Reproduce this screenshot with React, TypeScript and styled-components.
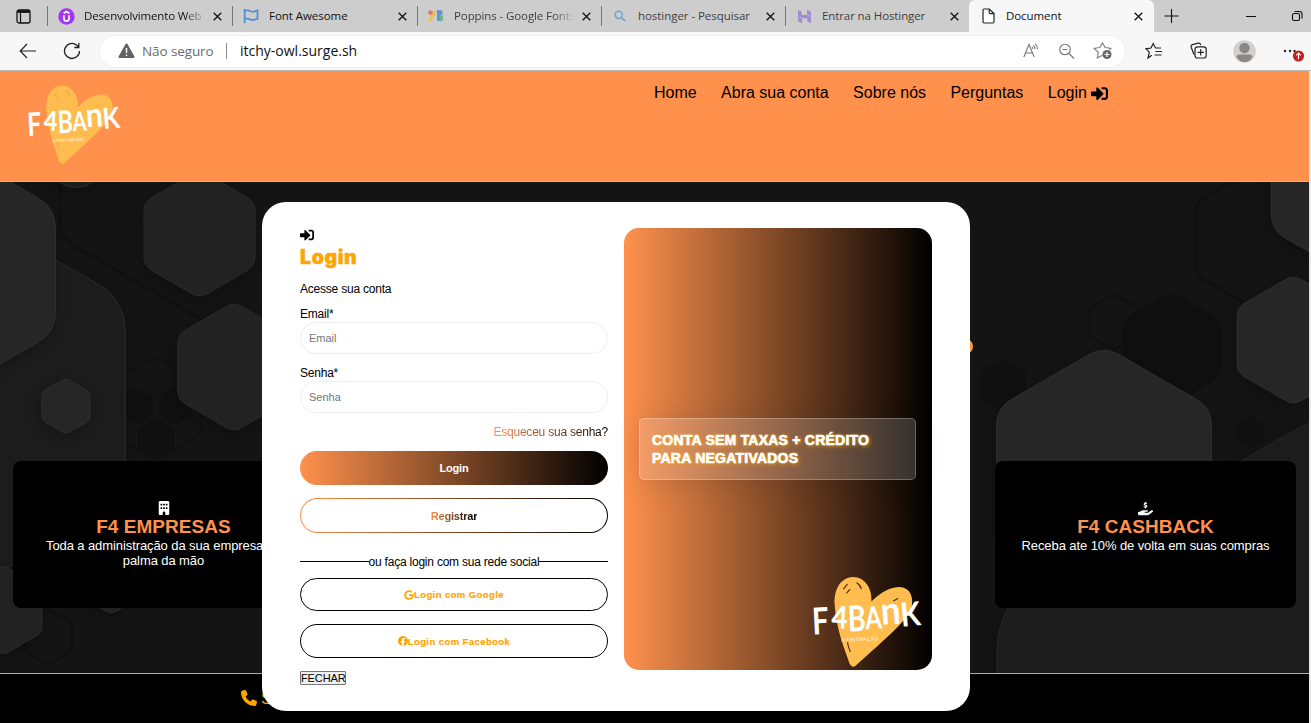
import React from "react";
import styled, { createGlobalStyle, css } from "styled-components";
import {
  FaBuilding,
  FaFacebook,
  FaGoogle,
  FaHandHoldingDollar,
  FaPhone,
} from "react-icons/fa6";
import { FaSignInAlt } from "react-icons/fa";

const GlobalStyle = createGlobalStyle`
  * { box-sizing: border-box; margin: 0; padding: 0; }
  body { background: #e9e9e9; font-family: "Liberation Sans", Arial, sans-serif; overflow: hidden; }
`;

const brand = "linear-gradient(to right, #ff914d, #000)";

const Window = styled.div`
  display: flex;
  flex-direction: column;
  width: 1311px;
  height: 723px;
  overflow: hidden;
`;

/* ---------- Browser chrome ---------- */

const TabStrip = styled.div`
  display: flex;
  align-items: stretch;
  height: 32px;
  background: #cdcdcd;
  font-family: "Open Sans", "Noto Sans", sans-serif;
  font-size: 11.5px;
  color: #111;
`;

const WorkspaceSlot = styled.div`
  display: flex;
  width: 47px;
  align-items: center;
  justify-content: center;
`;

const Tab = styled.div<{ $active?: boolean; $dim?: boolean; $width: number }>`
  display: flex;
  align-items: center;
  width: ${(p) => p.$width}px;
  padding: 0 9px 0 10px;
  color: ${(p) => (p.$dim ? "#3f3f3f" : "#111")};
  background: linear-gradient(#777, #777) left center / 1px 20px no-repeat;
  ${(p) =>
    p.$active &&
    css`
      background: #f7f7f7;
      border-radius: 6px 6px 0 0;
      padding-right: 10px;
    `}
`;

const TabIcon = styled.span<{ $dim?: boolean }>`
  display: flex;
  width: 18px;
  height: 18px;
  margin-right: 9px;
  align-items: center;
  justify-content: center;
  opacity: ${(p) => (p.$dim ? 0.6 : 1)};
`;

const TabTitle = styled.span<{ $fade?: boolean; $track: number }>`
  flex: 1;
  min-width: 0;
  overflow: hidden;
  white-space: nowrap;
  line-height: 18px;
  letter-spacing: ${(p) => p.$track}px;
  ${(p) =>
    p.$fade &&
    css`
      mask-image: linear-gradient(to right, #000 84%, rgba(0, 0, 0, 0.15));
    `}
`;

const CloseSlot = styled.span`
  display: flex;
  width: 20px;
  justify-content: flex-end;
  padding-right: 1px;
`;

const WindowButtons = styled.div`
  display: flex;
  flex: 1;
  align-items: center;
  padding-left: 10px;
`;

const Toolbar = styled.div`
  display: flex;
  align-items: center;
  height: 39px;
  padding: 0 5px 0 19px;
  background: #f7f7f7;
  border-bottom: 1px solid #b9b9b9;
  font-family: "Open Sans", "Noto Sans", sans-serif;
`;

const ToolButton = styled.span<{ $left?: number }>`
  display: flex;
  margin-left: ${(p) => p.$left ?? 0}px;
`;

const AddressBar = styled.div`
  display: flex;
  align-items: center;
  width: 1026px;
  height: 31px;
  margin-left: 19px;
  padding: 0 13px 0 18px;
  border-radius: 16px;
  background: #fff;
  box-shadow: 0 0 0 1px #efefef;
  font-size: 13.5px;
  line-height: 20px;
`;

const NotSecure = styled.span`
  margin-left: 7px;
  width: 73px;
  white-space: nowrap;
  color: #6b6b6b;
  letter-spacing: -0.1px;
`;

const AddressDivider = styled.span`
  width: 1px;
  height: 16px;
  margin: 0 13px 0 11px;
  background: #8a8a8a;
`;

const Address = styled.span`
  flex: 1;
  color: #111;
  font-size: 14px;
`;

/* ---------- Site ---------- */

const Site = styled.div`
  position: relative;
  display: flex;
  flex-direction: column;
  width: 1309px;
  flex: 1;
  min-height: 0;
`;

const Header = styled.header`
  display: flex;
  align-items: flex-start;
  height: 111px;
  background: #ff914d;
  border-bottom: 1px solid #ffb347;
`;

const HeaderLogo = styled.div`
  width: 626px;
  padding: 14px 0 0 28px;
`;

const Nav = styled.nav`
  display: flex;
  gap: 24.4px;
  padding: 13px 0 0 28px;
  font-size: 16px;
  line-height: 18px;
  color: #000;
`;

const NavLink = styled.a`
  display: flex;
  align-items: center;
  gap: 4px;
  white-space: nowrap;
`;

const Hero = styled.main`
  position: relative;
  display: flex;
  align-items: flex-end;
  justify-content: space-between;
  height: 491px;
  padding: 0 13px 65px;
  background: #141414;
  overflow: hidden;
`;

const Backdrop = styled.svg`
  position: absolute;
  inset: 0;
`;

const CallToAction = styled.span`
  position: absolute;
  top: 156px;
  left: 800px;
  width: 173px;
  height: 17px;
  border-radius: 9px;
  background: #ff914d;
  border: 1px solid #ffa733;
`;

const ServiceCard = styled.section`
  position: relative;
  display: flex;
  flex-direction: column;
  align-items: center;
  width: 301px;
  height: 147px;
  padding: 40px 30px 0;
  border-radius: 8px;
  background: #000;
  color: #fff;
  font-size: 13px;
  line-height: 15px;
  letter-spacing: -0.09px;
  text-align: center;
`;

const CardIcon = styled.span`
  display: flex;
  height: 15px;
`;

const ServiceTitle = styled.h2`
  font-size: 19px;
  line-height: 21px;
  letter-spacing: 0.05px;
  color: #ff914d;
`;

const ServiceText = styled.p`
  margin-top: 1px;
  white-space: nowrap;
`;

const Footer = styled.footer`
  display: flex;
  align-items: flex-start;
  gap: 4px;
  flex: 1;
  padding: 16px 0 0 241px;
  border-top: 1px solid #ffa500;
  background: #000;
  color: #ffa500;
  font-size: 16px;
  line-height: 18px;
`;

/* ---------- Login dialog ---------- */

const Dialog = styled.div`
  position: absolute;
  top: 131px;
  left: 262px;
  display: flex;
  gap: 16px;
  width: 708px;
  height: 509px;
  padding: 26px 38px;
  border-radius: 24px;
  background: #fff;
`;

const Form = styled.form`
  display: flex;
  flex-direction: column;
  width: 308px;
  font-size: 12px;
  line-height: 14px;
  letter-spacing: -0.22px;
  color: #000;
`;

const FormTitle = styled.h1`
  margin-top: 2px;
  font-family: Inter, "Liberation Sans", sans-serif;
  font-weight: 900;
  font-size: 19.5px;
  line-height: 26px;
  letter-spacing: 0.6px;
  -webkit-text-stroke: 0.4px #ffa500;
  color: #ffa500;
`;

const Intro = styled.p`
  margin: 12px 0 11px;
`;

const Field = styled.label`
  display: flex;
  flex-direction: column;
  margin-bottom: 12px;
`;

const Input = styled.input`
  height: 32px;
  margin-top: 1px;
  padding: 0 8px;
  border: 1px solid #efefef;
  border-radius: 16px;
  background: #fff;
  font: 11px "Liberation Sans", Arial, sans-serif;
  &::placeholder { color: #757575; }
`;

const Forgot = styled.a`
  align-self: flex-end;
  background: ${brand};
  background-clip: text;
  -webkit-background-clip: text;
  color: transparent;
`;

const Button = styled.button<{ $filled?: boolean }>`
  display: flex;
  flex: none;
  align-items: center;
  justify-content: center;
  height: ${(p) => (p.$filled ? 34 : 35)}px;
  margin-top: ${(p) => (p.$filled ? 12 : 13)}px;
  border: ${(p) => (p.$filled ? "0" : "1px solid transparent")};
  border-radius: 18px;
  background: ${(p) =>
    p.$filled ? brand : `linear-gradient(#fff, #fff) padding-box, ${brand} border-box`};
  color: #fff;
  font: bold 11px "Liberation Sans", Arial, sans-serif;
  letter-spacing: -0.2px;
`;

const GradientText = styled.span`
  background: linear-gradient(to right, #ff914d, #000 92%);
  background-clip: text;
  -webkit-background-clip: text;
  color: transparent;
`;

const Divider = styled.div`
  display: flex;
  align-items: center;
  margin: 22px 0 9px;
  white-space: nowrap;
  &::before, &::after { content: ""; flex: 1; height: 1px; margin-top: -1px; background: #000; }
`;

const SocialButton = styled.button<{ $height: number }>`
  display: flex;
  flex: none;
  align-items: center;
  justify-content: center;
  height: ${(p) => p.$height}px;
  margin-bottom: 13px;
  border: 1px solid #000;
  border-radius: 18px;
  background: #fff;
  color: #ffa500;
  font: bold 9.5px "Liberation Sans", Arial, sans-serif;
  letter-spacing: 0.42px;
  -webkit-text-stroke: 0.2px #ffa500;
`;

const CloseButton = styled.button`
  align-self: flex-start;
  width: 46px;
  height: 14px;
  border: 1px solid #767676;
  border-radius: 1px;
  background: #efefef;
  color: #000;
  font: 11px/12px "Liberation Sans", Arial, sans-serif;
  letter-spacing: -0.1px;
  white-space: nowrap;
`;

const Promo = styled.aside`
  display: flex;
  flex-direction: column;
  justify-content: space-between;
  width: 308px;
  height: 442px;
  padding: 190px 10px 2px 15px;
  border-radius: 15px;
  background: ${brand};
`;

const PromoMessage = styled.p`
  width: 277px;
  height: 62px;
  padding: 12px;
  border: 1px solid rgba(255, 255, 255, 0.25);
  border-radius: 5px;
  background: rgba(255, 255, 255, 0.17);
  box-shadow: 0 4px 30px rgba(0, 0, 0, 0.12);
  color: #fff;
  font-size: 14px;
  font-weight: 900;
  line-height: 18px;
  letter-spacing: 0.23px;
  -webkit-text-stroke: 0.7px #fff;
  text-shadow: 1px 1px 4px #ffa500;
  white-space: nowrap;
`;

const PromoLogo = styled.div`
  align-self: flex-end;
  display: flex;
`;

/* ---------- Drawings ---------- */

const letters = [
  { ch: "F", x: 579, y: 704, w: 50, size: 112, rot: -3 },
  { ch: "4", x: 634, y: 684, w: 49, size: 94, rot: 3 },
  { ch: "B", x: 686, y: 695, w: 54, size: 108, rot: -2 },
  { ch: "A", x: 739, y: 688, w: 50, size: 94, rot: -3 },
  { ch: "n", x: 786, y: 674, w: 60, size: 116, rot: -4 },
  { ch: "K", x: 846, y: 680, w: 60, size: 100, rot: -5 },
];

function Logo({ width, height, marks }: { width: number; height: number; marks: string }) {
  return (
    <svg width={width} height={height} viewBox="580 527 328 278" preserveAspectRatio="none" overflow="visible">
      <path
        d="M645 612C643 568 662 532 700 530C738 530 758 566 756 604C780 578 812 560 842 560C874 563 884 592 876 625C862 662 800 715 708 798Q698 806 690 792C675 745 650 690 645 612Z"
        fill="#ffbd4f"
      />
      <g stroke={marks} strokeWidth="3.5" strokeLinecap="round" fill="none">
        <path d="M672 566l11-14M681 578l10-10M712 548q10 4 13 17M714 549q8 7 10 15M823 602l12-7M684 728q2 15 8 27" />
      </g>
      <g fill="#fff" fontFamily="Lato, sans-serif" fontWeight="700">
        {letters.map((l) => (
          <text
            key={l.ch}
            x={l.x}
            y={l.y}
            fontSize={l.size}
            textLength={l.w}
            lengthAdjust="spacingAndGlyphs"
            transform={`rotate(${l.rot} ${l.x} ${l.y})`}
          >
            {l.ch}
          </text>
        ))}
        <text x="666" y="725" fontSize="14" fontWeight="400" textLength="110" transform="rotate(-2 666 725)">
          A FINOVAÇÃO
        </text>
      </g>
    </svg>
  );
}

/** Pointy-topped hexagon with rounded corners, as a path. */
function hexPath(cx: number, cy: number, r: number, round: number) {
  const pts = Array.from({ length: 6 }, (_, i) => {
    const a = (Math.PI / 3) * i - Math.PI / 2;
    return [cx + r * Math.cos(a), cy + r * Math.sin(a)];
  });
  const t = round / r;
  return (
    pts
      .map(([x, y], i) => {
        const [px, py] = pts[(i + 5) % 6];
        const [nx, ny] = pts[(i + 1) % 6];
        return `${i ? "L" : "M"}${x + (px - x) * t} ${y + (py - y) * t}Q${x} ${y} ${x + (nx - x) * t} ${y + (ny - y) * t}`;
      })
      .join("") + "Z"
  );
}

type Hex = [cx: number, cy: number, r: number, round: number, fill: string, stroke?: string, width?: number];

const flatHexes: Hex[] = [
  [156, 226, 52, 8, "none", "#111", 3],
  [137, 224, 19, 4, "#101010"],
  [175, 224, 19, 4, "#101010"],
  [156, 256, 21, 4, "#101010"],
  [48, 455, 28, 4, "none", "#101010", 3],
  [1258, 57, 72, 8, "none", "#101010", 3.5],
  [1114, 140, 28, 4, "none", "#101010", 3],
  [1172, 166, 57, 9, "#0f0f0f"],
  [1003, 203, 27, 4, "#101010"],
  [1250, 250, 17, 3, "#101010"],
];

const raisedHexes: Hex[] = [
  [76, -62, 72, 18, "#1f1f1f", "#292929"],
  [-48, 218, 200, 32, "#1f1f1f", "#2a2a2a"],
  [-52, 88, 124, 20, "#262626", "#303030"],
  [199.5, 52, 64, 9, "#202020", "#2b2b2b"],
  [234, 185, 65, 9, "#202020", "#2b2b2b"],
  [66, 224, 28, 4, "#272727", "#2d2d2d"],
  [3, 428, 45, 6, "#232323", "#2b2b2b"],
  [111, 402, 30, 4, "#232323", "#2b2b2b"],
  [1340, 618, 396, 50, "#1f1f1f", "#252525"],
  [1104, 288, 124, 17, "#262626", "#303030"],
  [1293.5, 158, 65, 9, "#262626", "#303030"],
  [1358, -2, 100, 16, "#262626", "#303030"],
];

function HexBackdrop() {
  const draw = ([cx, cy, r, round, fill, stroke, width]: Hex, i: number) => (
    <path key={i} d={hexPath(cx, cy, r, round)} fill={fill} stroke={stroke} strokeWidth={width ?? 1} />
  );
  return (
    <Backdrop width="1309" height="491" viewBox="0 0 1309 491">
      <defs>
        <filter id="lift" x="-30%" y="-30%" width="160%" height="160%">
          <feDropShadow dx="-2" dy="4" stdDeviation="8" floodColor="#000" floodOpacity="0.3" />
        </filter>
      </defs>
      <path d="M60 0V36Q60 56 76 65L270 177" fill="none" stroke="#101010" strokeWidth="3.5" />
      {flatHexes.map(draw)}
      {raisedHexes.map((h, i) => (
        <g key={i} filter="url(#lift)">
          {draw(h, i)}
        </g>
      ))}
    </Backdrop>
  );
}

const CloseIcon = () => (
  <svg width="9" height="9" viewBox="0 0 9 9" stroke="#111" strokeWidth="1.3">
    <path d="M.7.7l7.6 7.6M8.3.7L.7 8.3" />
  </svg>
);

const UdemyIcon = () => (
  <svg width="17" height="17" viewBox="0 0 17 17">
    <circle cx="8.5" cy="8.5" r="8.2" fill="#a435f0" />
    <path d="M5.9 7.2v3c0 1.8 1 2.8 2.6 2.8s2.6-1 2.6-2.8v-3M5.6 5.3l2.9-1.7 2.9 1.7" fill="none" stroke="#fff" strokeWidth="1.7" />
  </svg>
);

const FlagIcon = () => (
  <svg width="16" height="16" viewBox="0 0 16 16" fill="none" stroke="#538dd7" strokeWidth="1.8">
    <path d="M1.7 1v14M1.7 2.4h2.8c2 0 2.7 1.4 5 1.4 1.7 0 3-.7 5-1.4v8.4c-2 .7-3.2 1.2-5 1.2-2.3 0-3-1.3-5-1.3H1.7" />
  </svg>
);

const FontsIcon = () => (
  <svg width="17" height="14" viewBox="0 0 17 14">
    <path d="M5 2h5L3 12H0z" fill="#fbbc04" />
    <circle cx="2.5" cy="3.6" r="2.3" fill="#ea4335" />
    <path d="M9 1h3v11H9z" fill="#1a73e8" />
    <path d="M12 1a2.7 2.7 0 010 5.4z" fill="#1a73e8" />
    <path d="M12 6a3.2 3.2 0 010 6.4z" fill="#34a853" />
  </svg>
);

const SearchIcon = () => (
  <svg width="12" height="12" viewBox="0 0 12 12" fill="none" stroke="#3b86d6" strokeWidth="1.6">
    <circle cx="4.8" cy="4.8" r="3.6" />
    <path d="M7.5 7.5l3.6 3.6" />
  </svg>
);

const HostingerIcon = () => (
  <svg width="15" height="15" viewBox="0 0 15 15" fill="#8561d5">
    <path d="M1 .7l3.7 2v3.2h5L13 8H1zM10 .7l4 2v4.8l-4-2zM14 14.3l-3.8-2V9.2H5L2 7.2h12zM5 14.3l-4-2V7.8l4 2z" />
  </svg>
);

const PageIcon = () => (
  <svg width="13" height="16" viewBox="0 0 13 16" fill="#fff" stroke="#222" strokeWidth="1.2">
    <path d="M1 2.2C1 1.4 1.4 1 2.2 1h5L12 5.6v8.2c0 .8-.4 1.2-1.2 1.2H2.2C1.4 15 1 14.6 1 13.8zM7.2 1v3.4c0 .8.4 1.2 1.2 1.2H12" />
  </svg>
);

const tabs = [
  { title: "Desenvolvimento Web", icon: <UdemyIcon />, width: 185, track: -0.15, fade: true },
  { title: "Font Awesome", icon: <FlagIcon />, width: 185, track: -0.05 },
  { title: "Poppins - Google Fonts", icon: <FontsIcon />, width: 184, track: -0.1, fade: true, dim: true },
  { title: "hostinger - Pesquisar", icon: <SearchIcon />, width: 184, track: -0.05, dim: true },
  { title: "Entrar na Hostinger", icon: <HostingerIcon />, width: 184, track: -0.1, dim: true },
  { title: "Document", icon: <PageIcon />, width: 185, track: -0.08, active: true },
];

function BrowserChrome() {
  return (
    <>
      <TabStrip>
        <WorkspaceSlot>
          <svg width="15" height="15" viewBox="0 0 15 15" fill="none" stroke="#111" strokeWidth="1.3">
            <rect x="1" y="1" width="13" height="13" rx="2" />
            <path d="M4.5 4v10" strokeWidth="1.2" />
            <path d="M1.5 2.6h12" strokeWidth="2.6" />
          </svg>
        </WorkspaceSlot>
        {tabs.map((t) => (
          <Tab key={t.title} $width={t.width} $active={t.active} $dim={t.dim}>
            <TabIcon $dim={t.dim}>{t.icon}</TabIcon>
            <TabTitle $fade={t.fade} $track={t.track}>{t.title}</TabTitle>
            <CloseSlot>
              <CloseIcon />
            </CloseSlot>
          </Tab>
        ))}
        <WindowButtons>
          <svg width="140" height="16" viewBox="0 0 140 16" fill="none" stroke="#111" strokeWidth="1.1">
            <path d="M.5 8h14M7.5 1v14M82 8.5h10" />
            <rect x="128.5" y="5.5" width="7" height="7" rx="1.5" />
            <path d="M130.5 3.5h5a2.5 2.5 0 012.5 2.5v4.5" />
          </svg>
        </WindowButtons>
      </TabStrip>
      <Toolbar>
        <ToolButton>
          <svg width="18" height="16" viewBox="0 0 18 16" fill="none" stroke="#222" strokeWidth="1.2">
            <path d="M17 8H1.5M8 1L1.2 8 8 15" />
          </svg>
        </ToolButton>
        <ToolButton $left={26}>
          <svg width="18" height="18" viewBox="0 0 18 18" fill="none" stroke="#222" strokeWidth="1.3">
            <path d="M16.5 9A7.5 7.5 0 1113.8 3.2L15.5 5M15.8 1v4.5h-4.5" />
          </svg>
        </ToolButton>
        <AddressBar>
          <svg width="17" height="16" viewBox="0 0 17 16">
            <path d="M7.4 1.2a1.3 1.3 0 012.2 0l6.7 12a1.2 1.2 0 01-1.1 1.8H1.8a1.2 1.2 0 01-1.1-1.8z" fill="#616161" />
            <path d="M8.5 5v5M8.5 11.5v1.6" stroke="#fff" strokeWidth="1.5" />
          </svg>
          <NotSecure>Não seguro</NotSecure>
          <AddressDivider />
          <Address>itchy-owl.surge.sh</Address>
          <svg width="90" height="18" viewBox="0 0 90 18" fill="none" stroke="#777" strokeWidth="1.1">
            <path d="M1.8 15L7 2.5 12.2 15M3.6 11h6.8M11.5 3.5q1.6 1.6 1.5 3.8M13.3 1.8q2.3 2.3 2.2 5.5M10 5q.7.8.8 2" />
            <circle cx="43" cy="7.5" r="5.3" />
            <path d="M40.5 7.5h5M47 11.5l5 5" />
            <path d="M80.5 13.2l-5.2 2.8 1-5.7-4.1-4 5.7-.8L80.5 1l2.6 4.5 5.7.8-1.5 1.5" />
            <circle cx="85" cy="12.5" r="4.5" fill="#666" stroke="none" />
            <path d="M82.500 12.500h5M85 10v5" stroke="#fff" strokeWidth="1.2" />
          </svg>
        </AddressBar>
        <ToolButton $left={20}>
          <svg width="18" height="18" viewBox="0 0 18 18" fill="none" stroke="#222" strokeWidth="1.2">
            <path d="M6.8 13.2L3 16l1.3-5.8L1 6.8l5-.8L8.2 1.5 10.5 6H16M10.5 9.5H17M9.5 13H16.5" />
          </svg>
        </ToolButton>
        <ToolButton $left={27}>
          <svg width="17" height="18" viewBox="0 0 17 18" fill="none" stroke="#222" strokeWidth="1.2">
            <path d="M4 12.5L1.2 5.2Q.6 3.2 2.5 2.6L8 1.2Q10 .8 10.8 3" />
            <rect x="5" y="4.8" width="11.2" height="11.2" rx="2.5" />
            <path d="M7.5 10.4h6.4M10.7 7.2v6.4" />
          </svg>
        </ToolButton>
        <ToolButton $left={26}>
          <svg width="23" height="23" viewBox="0 0 23 23">
            <circle cx="11.5" cy="11.5" r="11.3" fill="#d2d0ce" />
            <circle cx="11.5" cy="8" r="5.2" fill="#8a8886" />
            <path d="M3.5 17q0-2.5 3-2.5h10q3 0 3 2.5-2.7 5-8 5t-8-5z" fill="#8a8886" />
          </svg>
        </ToolButton>
        <ToolButton $left={27}>
          <svg width="23" height="24" viewBox="0 0 23 24">
            <g fill="#222">
              <circle cx="2" cy="12" r="1.2" />
              <circle cx="7" cy="12" r="1.2" />
              <circle cx="11.5" cy="12" r="1.2" />
            </g>
            <circle cx="15.5" cy="17" r="5.6" fill="#c4201f" />
            <path d="M15.5 20.2V14M13.2 16.300l2.300-2.300 2.300 2.300" fill="none" stroke="#fff" strokeWidth="1.1" />
          </svg>
        </ToolButton>
      </Toolbar>
    </>
  );
}

function LoginDialog() {
  return (
    <Dialog role="dialog" aria-label="Login">
      <Form>
        <FaSignInAlt size={14} />
        <FormTitle>Login</FormTitle>
        <Intro>Acesse sua conta</Intro>
        <Field>
          Email*
          <Input type="email" placeholder="Email" />
        </Field>
        <Field>
          Senha*
          <Input type="password" placeholder="Senha" />
        </Field>
        <Forgot>Esqueceu sua senha?</Forgot>
        <Button type="button" $filled>Login</Button>
        <Button type="button">
          <GradientText>Registrar</GradientText>
        </Button>
        <Divider>ou faça login com sua rede social</Divider>
        <SocialButton type="button" $height={33}>
          <FaGoogle size={10} />
          Login com Google
        </SocialButton>
        <SocialButton type="button" $height={34}>
          <FaFacebook size={10} />
          Login com Facebook
        </SocialButton>
        <CloseButton type="button">FECHAR</CloseButton>
      </Form>
      <Promo>
        <PromoMessage>
          CONTA SEM TAXAS + CRÉDITO
          <br />
          PARA NEGATIVADOS
        </PromoMessage>
        <PromoLogo>
          <Logo width={109} height={92} marks="#4a2c16" />
        </PromoLogo>
      </Promo>
    </Dialog>
  );
}

export default function App() {
  return (
    <Window>
      <GlobalStyle />
      <BrowserChrome />
      <Site>
        <Header>
          <HeaderLogo>
            <Logo width={93} height={80} marks="#f9a04c" />
          </HeaderLogo>
          <Nav>
            <NavLink>Home</NavLink>
            <NavLink>Abra sua conta</NavLink>
            <NavLink>Sobre nós</NavLink>
            <NavLink>Perguntas</NavLink>
            <NavLink>
              Login <FaSignInAlt size={17} />
            </NavLink>
          </Nav>
        </Header>
        <Hero>
          <HexBackdrop />
          <CallToAction />
          <ServiceCard>
            <CardIcon>
              <FaBuilding size={14} />
            </CardIcon>
            <ServiceTitle>F4 EMPRESAS</ServiceTitle>
            <ServiceText>
              Toda a administração da sua empresa na
              <br />
              palma da mão
            </ServiceText>
          </ServiceCard>
          <ServiceCard>
            <CardIcon>
              <FaHandHoldingDollar size={15} />
            </CardIcon>
            <ServiceTitle>F4 CASHBACK</ServiceTitle>
            <ServiceText>Receba ate 10% de volta em suas compras</ServiceText>
          </ServiceCard>
        </Hero>
        <Footer>
          <FaPhone size={16} />
          SAC
        </Footer>
        <LoginDialog />
      </Site>
    </Window>
  );
}
